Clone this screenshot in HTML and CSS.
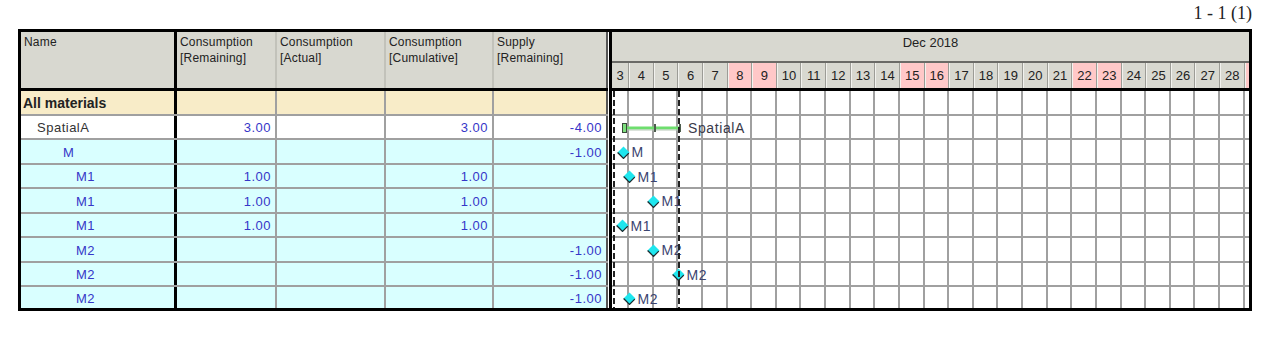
FILE: index.html
```html
<!DOCTYPE html>
<html>
<head>
<meta charset="utf-8">
<link rel="stylesheet" href="styles.css">
</head>
<body>
<div class="page">
  <div class="pager">1 - 1 (1)</div>
  <div class="chart">
    <div class="table">
      <div class="thead">
        <div class="th c-name">Name</div>
        <div class="th c-rem">Consumption<br>[Remaining]</div>
        <div class="th c-act">Consumption<br>[Actual]</div>
        <div class="th c-cum">Consumption<br>[Cumulative]</div>
        <div class="th c-sup">Supply<br>[Remaining]</div>
      </div>
      <div class="tbody">
        <div class="tr total">
          <div class="td c-name lvl0">All materials</div>
          <div class="td c-rem"></div><div class="td c-act"></div><div class="td c-cum"></div><div class="td c-sup"></div>
        </div>
        <div class="tr summary">
          <div class="td c-name lvl1">SpatialA</div>
          <div class="td c-rem num">3.00</div><div class="td c-act"></div><div class="td c-cum num">3.00</div><div class="td c-sup num">-4.00</div>
        </div>
        <div class="tr">
          <div class="td c-name lvl2">M</div>
          <div class="td c-rem"></div><div class="td c-act"></div><div class="td c-cum"></div><div class="td c-sup num">-1.00</div>
        </div>
        <div class="tr">
          <div class="td c-name lvl3">M1</div>
          <div class="td c-rem num">1.00</div><div class="td c-act"></div><div class="td c-cum num">1.00</div><div class="td c-sup"></div>
        </div>
        <div class="tr">
          <div class="td c-name lvl3">M1</div>
          <div class="td c-rem num">1.00</div><div class="td c-act"></div><div class="td c-cum num">1.00</div><div class="td c-sup"></div>
        </div>
        <div class="tr">
          <div class="td c-name lvl3">M1</div>
          <div class="td c-rem num">1.00</div><div class="td c-act"></div><div class="td c-cum num">1.00</div><div class="td c-sup"></div>
        </div>
        <div class="tr">
          <div class="td c-name lvl3">M2</div>
          <div class="td c-rem"></div><div class="td c-act"></div><div class="td c-cum"></div><div class="td c-sup num">-1.00</div>
        </div>
        <div class="tr">
          <div class="td c-name lvl3">M2</div>
          <div class="td c-rem"></div><div class="td c-act"></div><div class="td c-cum"></div><div class="td c-sup num">-1.00</div>
        </div>
        <div class="tr">
          <div class="td c-name lvl3">M2</div>
          <div class="td c-rem"></div><div class="td c-act"></div><div class="td c-cum"></div><div class="td c-sup num">-1.00</div>
        </div>
      </div>
    </div>
    <div class="divider"></div>
    <div class="gantt">
      <div class="g-head">
        <div class="g-month">Dec 2018</div>
        <div class="g-days">
          <div class="day first">3</div>
          <div class="day">4</div>
          <div class="day">5</div>
          <div class="day">6</div>
          <div class="day">7</div>
          <div class="day we">8</div>
          <div class="day we">9</div>
          <div class="day">10</div>
          <div class="day">11</div>
          <div class="day">12</div>
          <div class="day">13</div>
          <div class="day">14</div>
          <div class="day we">15</div>
          <div class="day we">16</div>
          <div class="day">17</div>
          <div class="day">18</div>
          <div class="day">19</div>
          <div class="day">20</div>
          <div class="day">21</div>
          <div class="day we">22</div>
          <div class="day we">23</div>
          <div class="day">24</div>
          <div class="day">25</div>
          <div class="day">26</div>
          <div class="day">27</div>
          <div class="day">28</div>
          <div class="day we rest"></div>
        </div>
      </div>
      <div class="g-body">
        <div class="g-col first"></div>
        <div class="g-col"></div><div class="g-col"></div><div class="g-col"></div><div class="g-col"></div><div class="g-col"></div>
        <div class="g-col"></div><div class="g-col"></div><div class="g-col"></div><div class="g-col"></div><div class="g-col"></div>
        <div class="g-col"></div><div class="g-col"></div><div class="g-col"></div><div class="g-col"></div><div class="g-col"></div>
        <div class="g-col"></div><div class="g-col"></div><div class="g-col"></div><div class="g-col"></div><div class="g-col"></div>
        <div class="g-col"></div><div class="g-col"></div><div class="g-col"></div><div class="g-col"></div><div class="g-col"></div>
        <div class="g-col rest"></div>
        <div class="g-rows">
          <div class="g-row"></div>
          <div class="g-row">
            <div class="bar" style="left:10px">
              <svg width="62" height="12" viewBox="0 0 62 12">
                <rect x="0.5" y="1.5" width="4" height="9" fill="#7ee07e" stroke="#3a4a3a"/>
                <rect x="5" y="4.5" width="27" height="3" fill="#6ede6e"/>
                <rect x="5" y="7.5" width="27" height="1" fill="#b8c8b8"/>
                <rect x="32" y="2" width="2" height="8" fill="#4d5d4d"/>
                <rect x="34" y="4.5" width="23" height="3" fill="#6ede6e"/>
                <rect x="34" y="7.5" width="23" height="1" fill="#b8c8b8"/>
                <rect x="57" y="2" width="2" height="8" fill="#4d5d4d"/>
              </svg>
              <span class="lbl bar-lbl">SpatialA</span>
            </div>
          </div>
          <div class="g-row">
            <div class="ms" style="left:11px"><svg class="dia" width="13" height="13" viewBox="0 0 13 13"><polygon points="6.5,0.5 12.5,6.5 6.5,12.5 0.5,6.5" fill="#1ee6ee"/><polyline points="0.6,6.5 6.5,12.4 11.8,7.1" fill="none" stroke="#1c2c30" stroke-width="1.3"/></svg><span class="lbl">M</span></div>
          </div>
          <div class="g-row">
            <div class="ms" style="left:17px"><svg class="dia" width="13" height="13" viewBox="0 0 13 13"><polygon points="6.5,0.5 12.5,6.5 6.5,12.5 0.5,6.5" fill="#1ee6ee"/><polyline points="0.6,6.5 6.5,12.4 11.8,7.1" fill="none" stroke="#1c2c30" stroke-width="1.3"/></svg><span class="lbl">M1</span></div>
          </div>
          <div class="g-row">
            <div class="ms" style="left:41px"><svg class="dia" width="13" height="13" viewBox="0 0 13 13"><polygon points="6.5,0.5 12.5,6.5 6.5,12.5 0.5,6.5" fill="#1ee6ee"/><polyline points="0.6,6.5 6.5,12.4 11.8,7.1" fill="none" stroke="#1c2c30" stroke-width="1.3"/></svg><span class="lbl">M1</span></div>
          </div>
          <div class="g-row">
            <div class="ms" style="left:10px"><svg class="dia" width="13" height="13" viewBox="0 0 13 13"><polygon points="6.5,0.5 12.5,6.5 6.5,12.5 0.5,6.5" fill="#1ee6ee"/><polyline points="0.6,6.5 6.5,12.4 11.8,7.1" fill="none" stroke="#1c2c30" stroke-width="1.3"/></svg><span class="lbl">M1</span></div>
          </div>
          <div class="g-row">
            <div class="ms" style="left:41px"><svg class="dia" width="13" height="13" viewBox="0 0 13 13"><polygon points="6.5,0.5 12.5,6.5 6.5,12.5 0.5,6.5" fill="#1ee6ee"/><polyline points="0.6,6.5 6.5,12.4 11.8,7.1" fill="none" stroke="#1c2c30" stroke-width="1.3"/></svg><span class="lbl">M2</span></div>
          </div>
          <div class="g-row">
            <div class="ms" style="left:66px"><svg class="dia" width="13" height="13" viewBox="0 0 13 13"><polygon points="6.5,0.5 12.5,6.5 6.5,12.5 0.5,6.5" fill="#1ee6ee"/><polyline points="0.6,6.5 6.5,12.4 11.8,7.1" fill="none" stroke="#1c2c30" stroke-width="1.3"/></svg><span class="lbl">M2</span></div>
          </div>
          <div class="g-row">
            <div class="ms" style="left:17px"><svg class="dia" width="13" height="13" viewBox="0 0 13 13"><polygon points="6.5,0.5 12.5,6.5 6.5,12.5 0.5,6.5" fill="#1ee6ee"/><polyline points="0.6,6.5 6.5,12.4 11.8,7.1" fill="none" stroke="#1c2c30" stroke-width="1.3"/></svg><span class="lbl">M2</span></div>
          </div>
        </div>
        <div class="dash" style="left:1px"></div>
        <div class="dash" style="left:66px"></div>
      </div>
    </div>
  </div>
</div>
</body>
</html>
```
FILE: styles.css
```css
body {
  margin: 0;
  background: #fff;
  font-family: "Liberation Sans", Arial, sans-serif;
}

.page {
  width: 1234px;
  margin-left: 18px;
}

.pager {
  height: 29px;
  box-sizing: border-box;
  padding-top: 3px;
  text-align: right;
  font-family: "Liberation Serif", "Times New Roman", serif;
  font-size: 18px;
  line-height: 20px;
  color: #222;
}

.chart {
  display: flex;
  height: 282px;
  box-sizing: border-box;
  border: 3px solid #000;
}

/* ---------- left table ---------- */
.table {
  width: 587px;
  display: flex;
  flex-direction: column;
}

.thead {
  display: flex;
  height: 59px;
  box-sizing: border-box;
  border-bottom: 3px solid #000;
  background: #d8d8d0;
}

.th {
  box-sizing: border-box;
  padding: 2px 3px;
  font-size: 12px;
  line-height: 16px;
  letter-spacing: 0.2px;
  color: #222;
  border-right: 2px solid #c2c2ba;
}

.tbody {
  flex: 1;
  display: flex;
  flex-direction: column;
}

.tr {
  display: flex;
  height: 24.5px;
  box-sizing: border-box;
  border-bottom: 2px solid #a0a0a0;
  background: #d9ffff;
}

.tr:last-child {
  flex: 1;
  border-bottom: 0;
}

.tr.total { background: #f8ecc8; }
.tr.summary { background: #fff; }

.td {
  box-sizing: border-box;
  display: flex;
  align-items: center;
  padding: 2px 4px 0;
  font-size: 13px;
  letter-spacing: 0.5px;
  white-space: nowrap;
  color: #3636c8;
  border-right: 2px solid #a0a0a0;
}

.num { justify-content: flex-end; }

.lvl0 {
  padding-left: 2px;
  font-weight: bold;
  font-size: 14px;
  letter-spacing: 0;
  color: #222;
}
.lvl1 { padding-left: 16px; color: #333; }
.lvl2 { padding-left: 42px; }
.lvl3 { padding-left: 55px; }

.c-name { width: 156px; border-right: 3px solid #000; }
.c-rem { width: 100px; }
.c-act { width: 109px; }
.c-cum { width: 108px; }
.c-sup { width: 114px; border-right: 2px solid #555; }

.divider {
  width: 1px;
  background: #fff;
}

/* ---------- gantt ---------- */
.gantt {
  width: 640px;
  box-sizing: border-box;
  border-left: 3px solid #000;
  display: flex;
  flex-direction: column;
}

.g-head {
  height: 59px;
  box-sizing: border-box;
  border-bottom: 3px solid #000;
  background: #d8d8d0;
  display: flex;
  flex-direction: column;
}

.g-month {
  height: 31px;
  box-sizing: border-box;
  padding-top: 3px;
  border-bottom: 2px solid #6a6a66;
  text-align: center;
  font-size: 13px;
  line-height: 16px;
  color: #222;
}

.g-days {
  flex: 1;
  display: flex;
}

.day {
  flex: 0 0 24.64px;
  box-sizing: border-box;
  display: flex;
  align-items: center;
  justify-content: center;
  font-size: 13px;
  color: #222;
  border-left: 1px solid #f2f2ee;
  border-right: 1px solid #9c9c96;
}

.day.first {
  flex-basis: 17px;
  border-left: 0;
}

.day.rest {
  flex: 1 1 0;
  border-right: 0;
}

.day.we { background: #ffc8c8; }

.g-body {
  flex: 1;
  position: relative;
  display: flex;
  background: #fff;
}

.g-col {
  flex: 0 0 24.64px;
  box-sizing: border-box;
  border-right: 2px solid #a0a0a0;
}

.g-col.first { flex-basis: 17px; }

.g-col.rest {
  flex: 1 1 0;
  border-right: 0;
}

.g-rows {
  position: absolute;
  inset: 0;
  display: flex;
  flex-direction: column;
}

.g-row {
  position: relative;
  height: 24.5px;
  box-sizing: border-box;
  border-bottom: 2px solid #a0a0a0;
}

.g-row:last-child {
  flex: 1;
  border-bottom: 0;
}

.dash {
  position: absolute;
  top: 0;
  bottom: 0;
  width: 2px;
  background: repeating-linear-gradient(to bottom, #222 0 6px, transparent 6px 9px);
}

.ms,
.bar {
  position: absolute;
  top: 2px;
  bottom: 0;
  display: flex;
  align-items: center;
}

.dia {
  margin-left: -6.5px;
  display: block;
}

.bar svg { display: block; }

.lbl {
  margin-left: 2px;
  font-size: 14px;
  letter-spacing: 0.6px;
  color: #3b4470;
  white-space: nowrap;
}

.bar-lbl {
  margin-left: 4px;
  color: #3a3a4a;
}
```
